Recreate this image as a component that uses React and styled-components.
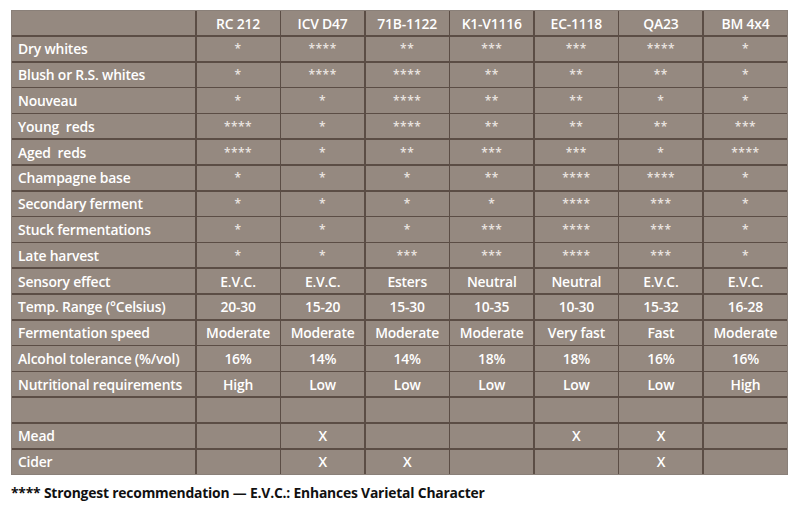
import React from "react";
import styled, { createGlobalStyle } from "styled-components";

const GlobalStyle = createGlobalStyle`
  body {
    margin: 0;
    background: #ffffff;
    font-family: "Open Sans", "Liberation Sans", sans-serif;
  }
`;

const strains = ["RC 212", "ICV D47", "71B-1122", "K1-V1116", "EC-1118", "QA23", "BM 4x4"];

const rows = [
  { label: "Dry whites", stars: true, values: ["*", "****", "**", "***", "***", "****", "*"] },
  { label: "Blush or R.S. whites", stars: true, values: ["*", "****", "****", "**", "**", "**", "*"] },
  { label: "Nouveau", stars: true, values: ["*", "*", "****", "**", "**", "*", "*"] },
  { label: "Young  reds", stars: true, values: ["****", "*", "****", "**", "**", "**", "***"] },
  { label: "Aged  reds", stars: true, values: ["****", "*", "**", "***", "***", "*", "****"] },
  { label: "Champagne base", stars: true, values: ["*", "*", "*", "**", "****", "****", "*"] },
  { label: "Secondary ferment", stars: true, values: ["*", "*", "*", "*", "****", "***", "*"] },
  { label: "Stuck fermentations", stars: true, values: ["*", "*", "*", "***", "****", "***", "*"] },
  { label: "Late harvest", stars: true, values: ["*", "*", "***", "***", "****", "***", "*"] },
  { label: "Sensory effect", values: ["E.V.C.", "E.V.C.", "Esters", "Neutral", "Neutral", "E.V.C.", "E.V.C."] },
  { label: "Temp. Range (°Celsius)", values: ["20-30", "15-20", "15-30", "10-35", "10-30", "15-32", "16-28"] },
  { label: "Fermentation speed", values: ["Moderate", "Moderate", "Moderate", "Moderate", "Very fast", "Fast", "Moderate"] },
  { label: "Alcohol tolerance (%/vol)", values: ["16%", "14%", "14%", "18%", "18%", "16%", "16%"] },
  { label: "Nutritional requirements", values: ["High", "Low", "Low", "Low", "Low", "Low", "High"] },
  { label: "", values: ["", "", "", "", "", "", ""] },
  { label: "Mead", values: ["", "X", "", "", "X", "X", ""] },
  { label: "Cider", values: ["", "X", "X", "", "", "X", ""] },
];

const Page = styled.div`
  padding: 10px 12px 0 11px;
  width: 800px;
  box-sizing: border-box;
`;

const Table = styled.div`
  display: grid;
  grid-template-columns: 183px repeat(7, 1fr);
  grid-auto-rows: 24.3px;
  gap: 1.5px;
  background: #5b4d45;
  border: 1px solid #8a8079;
`;

const Cell = styled.div`
  background: #958980;
  color: ${(p) => (p.$star ? "#ece6e2" : "#ffffff")};
  display: flex;
  align-items: center;
  justify-content: ${(p) => (p.$label ? "flex-start" : "center")};
  padding-left: ${(p) => (p.$label ? "6px" : "0")};
  font-size: ${(p) => (p.$star ? "12px" : "13.9px")};
  font-weight: 600;
  letter-spacing: ${(p) => (p.$star ? "0.5px" : "-0.2px")};
  white-space: pre;
`;

const Note = styled.div`
  margin-top: 8px;
  font-size: 13.9px;
  font-weight: 700;
  color: #111111;
  letter-spacing: -0.2px;
`;

export default function App() {
  return (
    <Page>
      <GlobalStyle />
      <Table>
        <Cell $label />
        {strains.map((s) => (
          <Cell key={s}>{s}</Cell>
        ))}
        {rows.map((r, i) => (
          <React.Fragment key={i}>
            <Cell $label>{r.label}</Cell>
            {r.values.map((v, j) => (
              <Cell key={j} $star={r.stars}>{v}</Cell>
            ))}
          </React.Fragment>
        ))}
      </Table>
      <Note>**** Strongest recommendation — E.V.C.: Enhances Varietal Character</Note>
    </Page>
  );
}
